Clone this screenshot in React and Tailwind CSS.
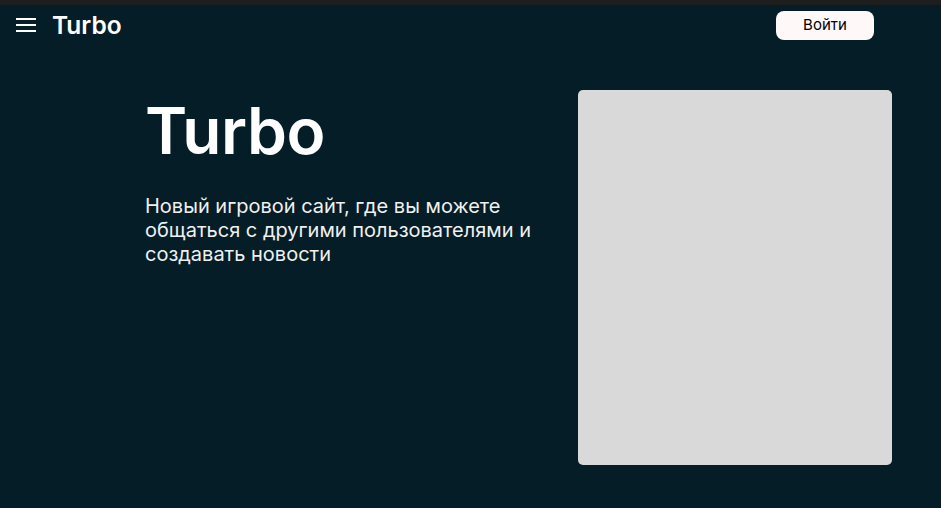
export default function App() {
  return (
    <div className="min-h-[508px] w-full bg-[#041d27] text-white" style={{ fontFamily: 'Inter, "Noto Sans", sans-serif' }}>
      <div className="h-[5px] bg-[#1e1e1e]" />

      {/* Header */}
      <header className="flex h-[40px] items-center justify-between pl-[16px] pr-[67px]">
        <div className="flex items-center gap-[16px]">
          <button className="flex h-[20px] w-[20px] flex-col justify-center gap-[4px]">
            <span className="block h-[2px] w-[20px] bg-white" />
            <span className="block h-[2px] w-[20px] bg-white" />
            <span className="block h-[2px] w-[20px] bg-white" />
          </button>
          <span className="text-[24.5px] font-semibold leading-none">Turbo</span>
        </div>
        <button className="h-[29px] w-[98px] rounded-lg bg-[#fff8f8] text-[15px] text-black">
          Войти
        </button>
      </header>

      {/* Hero */}
      <main className="flex items-start justify-between pl-[145px] pr-[49px] pt-[45px]">
        <div className="w-[400px] pt-[2px]">
          <h1 className="text-[64px] font-semibold leading-[78px] tracking-[-0.4px]">Turbo</h1>
          <p className="mt-[24px] text-[20px] leading-[24px] text-[#f0f0f0]">
            Новый игровой сайт, где вы можете общаться с другими пользователями и создавать новости
          </p>
        </div>
        <div className="h-[375px] w-[314px] rounded-[5px] bg-[#d9d9d9]" />
      </main>
    </div>
  );
}
